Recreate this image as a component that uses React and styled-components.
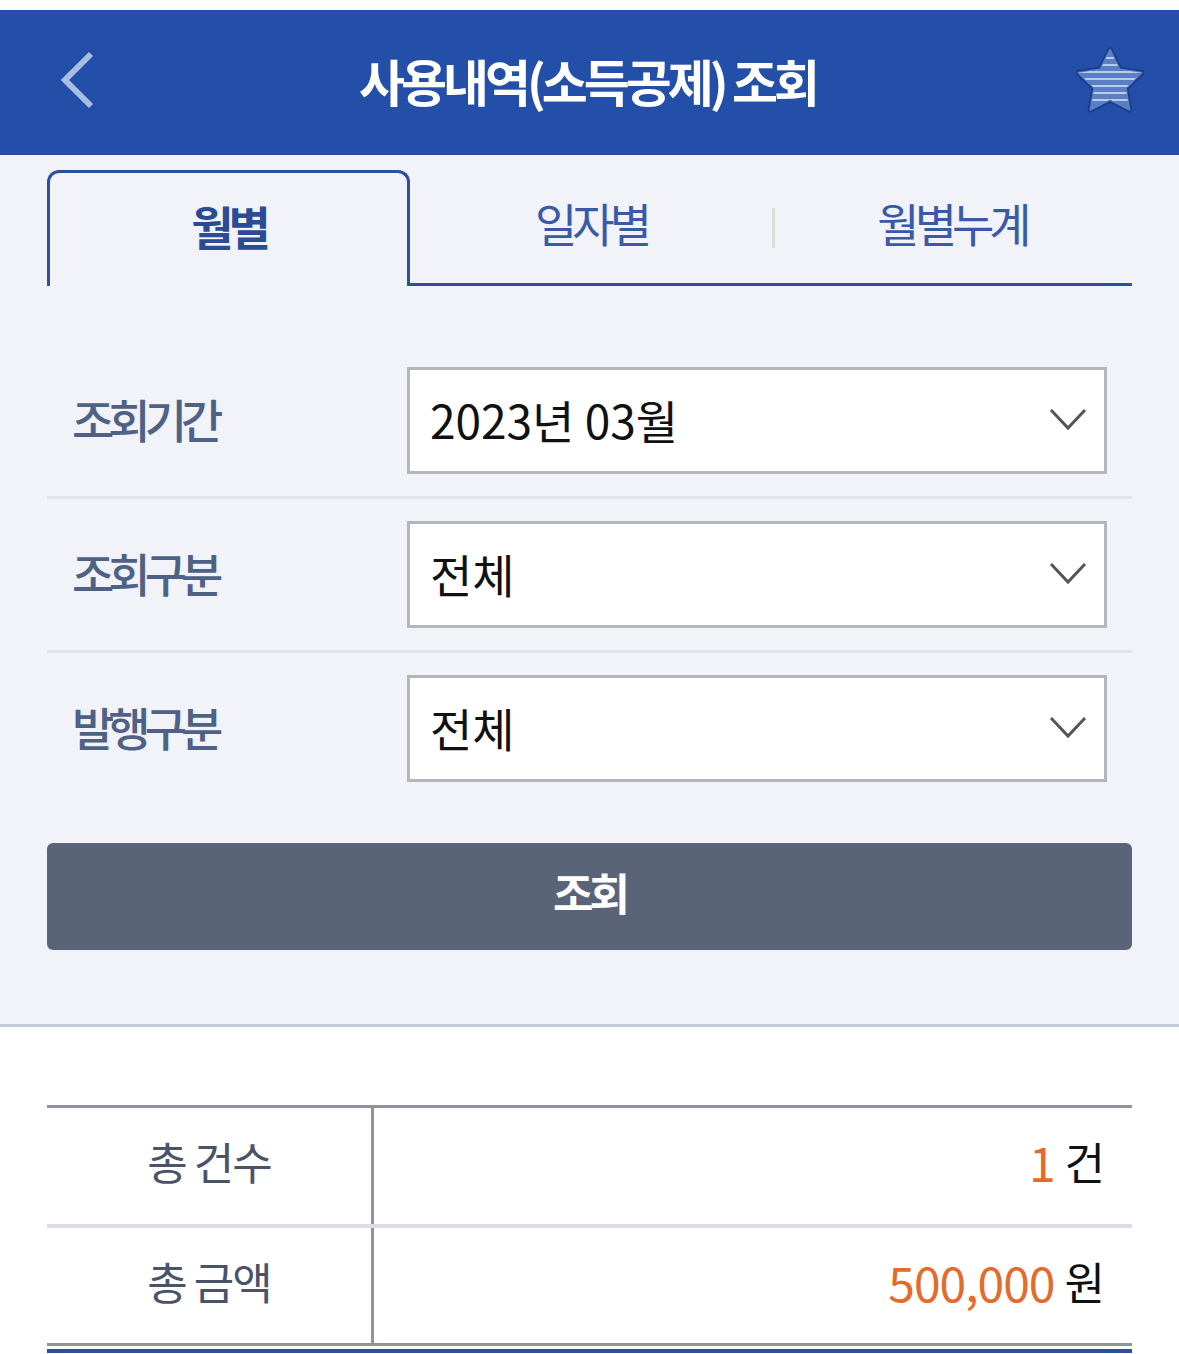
import React, { useState } from "react";
import styled, { createGlobalStyle } from "styled-components";

const GlobalStyle = createGlobalStyle`
  html, body {
    margin: 0;
    padding: 0;
    background: #ffffff;
  }
  body {
    font-family: "Noto Sans CJK KR", "Noto Sans", sans-serif;
  }
`;

const Page = styled.div`
  width: 1179px;
  padding-top: 10px;
  background: #ffffff;
`;

const Header = styled.header`
  height: 145px;
  box-sizing: border-box;
  background: #234fa8;
  display: flex;
  align-items: center;
  justify-content: space-between;
  padding: 0 32px 6px 52px;
`;

const Title = styled.h1`
  margin: 0;
  color: #ffffff;
  font-size: 50px;
  font-weight: 700;
  letter-spacing: -4px;
  line-height: 1;
`;

const IconButton = styled.button`
  border: none;
  background: none;
  padding: 0;
  display: flex;
  align-items: center;
  justify-content: center;
  width: ${(p) => p.$w}px;
  height: ${(p) => p.$h}px;
`;

const Search = styled.section`
  background: #f1f3f9;
  padding: 15px 47px 74px;
  border-bottom: 3px solid #c5cbd8;
`;

const Tabs = styled.div`
  display: flex;
  height: 116px;
`;

const Tab = styled.button`
  flex: 0 0 ${(p) => p.$w}px;
  position: relative;
  box-sizing: border-box;
  background: transparent;
  font-family: inherit;
  font-size: 46px;
  letter-spacing: -5px;
  font-weight: ${(p) => (p.$active ? 700 : 400)};
  color: ${(p) => (p.$active ? "#2b4b94" : "#3a5aa8")};
  border: ${(p) => (p.$active ? "3px solid #2e4f9c" : "none")};
  border-bottom: ${(p) => (p.$active ? "none" : "3px solid #2e4f9c")};
  border-radius: ${(p) => (p.$active ? "12px 12px 0 0" : "0")};
  padding: 0 0 10px;
  display: flex;
  align-items: center;
  justify-content: center;
`;

const TabSep = styled.span`
  position: absolute;
  left: 0;
  top: 38px;
  width: 3px;
  height: 40px;
  background: #dcdcdc;
`;

const Form = styled.div`
  margin-top: 81px;
`;

const Row = styled.div`
  display: flex;
  align-items: center;
  height: 107px;
  padding-bottom: 22px;
  border-bottom: 3px solid #e0e3ea;
  margin-bottom: 22px;
  &:last-child {
    margin-bottom: 0;
    padding-bottom: 0;
    border-bottom: none;
  }
`;

const Label = styled.div`
  width: 360px;
  padding: 0 0 6px 25px;
  box-sizing: border-box;
  color: #4f6285;
  font-size: 46px;
  font-weight: 500;
  letter-spacing: -6px;
`;

const Select = styled.div`
  width: 700px;
  height: 107px;
  box-sizing: border-box;
  border: 3px solid #b4b6bd;
  background: #ffffff;
  display: flex;
  align-items: center;
  justify-content: space-between;
  padding: 0 17px 4px 20px;
  color: #111111;
  font-size: 46px;
  letter-spacing: 0;
`;

const SubmitButton = styled.button`
  display: block;
  width: 100%;
  height: 107px;
  margin-top: 61px;
  padding: 0 0 10px;
  border: none;
  border-radius: 6px;
  background: #5a6479;
  color: #ffffff;
  font-family: inherit;
  font-size: 44px;
  font-weight: 700;
  letter-spacing: -4px;
`;

const Result = styled.section`
  padding: 78px 47px 0;
`;

const Table = styled.div`
  border-top: 3px solid #8e939e;
  border-bottom: 3px solid #8e939e;
  box-shadow: 0 3px 0 0 #ffffff, 0 7px 0 0 #2e4f9c;
  margin-bottom: 10px;
`;

const TRow = styled.div`
  display: grid;
  grid-template-columns: 324px 3px 1fr;
  height: ${(p) => (p.$last ? 115 : 116)}px;
  border-bottom: ${(p) => (p.$last ? "none" : "4px solid #dadde6")};
`;

const VLine = styled.div`
  background: #8e939e;
`;

const THead = styled.div`
  display: flex;
  align-items: center;
  justify-content: center;
  padding-bottom: 10px;
  color: #4a5368;
  font-size: 44px;
  letter-spacing: -2px;
`;

const TValue = styled.div`
  display: flex;
  align-items: center;
  justify-content: flex-end;
  padding: 0 30px 10px 0;
  font-size: 44px;
  color: #111111;
  letter-spacing: -3px;
`;

const Num = styled.span`
  color: #e36b2b;
  margin-right: 10px;
  font-size: 48px;
  letter-spacing: -1px;
`;

function Chevron() {
  return (
    <svg width="38" height="24" viewBox="0 0 38 24">
      <polyline points="2,3 19,21 36,3" fill="none" stroke="#555555" strokeWidth="3" />
    </svg>
  );
}

const STAR =
  "M35 4 L44.7 23.6 L66.4 26.8 L50.7 42.1 L54.4 63.7 L35 53.5 L15.6 63.7 L19.3 42.1 L3.6 26.8 L25.3 23.6 Z";

function Star() {
  return (
    <svg width="70" height="68" viewBox="0 0 70 68">
      <defs>
        <clipPath id="starClip">
          <path d={STAR} />
        </clipPath>
      </defs>
      <path d={STAR} fill="#1d3e8a" stroke="#1d3e8a" strokeWidth="6" strokeLinejoin="round" />
      <path d={STAR} fill="#5a7fc5" stroke="#5a7fc5" strokeWidth="2" strokeLinejoin="round" />
      <g clipPath="url(#starClip)" stroke="#b9cbee" strokeWidth="2">
        {[12, 19, 26, 33, 40, 47, 54].map((y) => (
          <line key={y} x1="0" y1={y} x2="70" y2={y} />
        ))}
      </g>
    </svg>
  );
}

const tabs = [
  { name: "월별", w: 363 },
  { name: "일자별", w: 362 },
  { name: "월별누계", w: 360 },
];

const fields = [
  { label: "조회기간", value: "2023년 03월" },
  { label: "조회구분", value: "전체" },
  { label: "발행구분", value: "전체" },
];

export default function App() {
  const [active, setActive] = useState(0);

  return (
    <Page>
      <GlobalStyle />
      <Header>
        <IconButton $w={50} $h={60}>
          <svg width="40" height="58" viewBox="0 0 40 58">
            <polyline points="34,3 8,29 34,55" fill="none" stroke="#a8bde3" strokeWidth="6" />
          </svg>
        </IconButton>
        <Title>사용내역(소득공제) 조회</Title>
        <IconButton $w={74} $h={70}>
          <Star />
        </IconButton>
      </Header>

      <Search>
        <Tabs>
          {tabs.map((t, i) => (
            <Tab key={t.name} $w={t.w} $active={i === active} onClick={() => setActive(i)}>
              {i === 2 && active === 0 && <TabSep />}
              {t.name}
            </Tab>
          ))}
        </Tabs>

        <Form>
          {fields.map((f) => (
            <Row key={f.label}>
              <Label>{f.label}</Label>
              <Select>
                <span>{f.value}</span>
                <Chevron />
              </Select>
            </Row>
          ))}
        </Form>

        <SubmitButton>조회</SubmitButton>
      </Search>

      <Result>
        <Table>
          <TRow>
            <THead>총 건수</THead>
            <VLine />
            <TValue>
              <Num>1</Num>건
            </TValue>
          </TRow>
          <TRow $last>
            <THead>총 금액</THead>
            <VLine />
            <TValue>
              <Num>500,000</Num>원
            </TValue>
          </TRow>
        </Table>
      </Result>
    </Page>
  );
}
